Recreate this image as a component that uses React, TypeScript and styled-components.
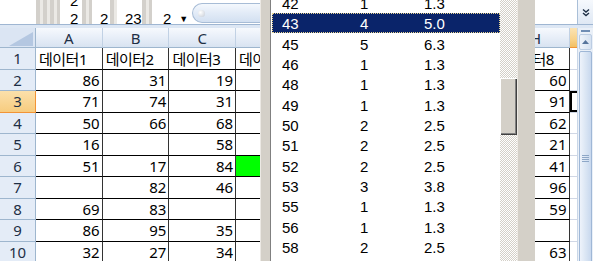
import React from "react";
import styled, { createGlobalStyle } from "styled-components";

const GlobalStyle = createGlobalStyle`
  html, body {
    margin: 0;
    padding: 0;
    background: #fff;
    overflow: hidden;
  }
`;

const Window = styled.div`
  position: relative;
  width: 593px;
  height: 261px;
  overflow: hidden;
  display: flex;
  flex-direction: column;
  font-family: "Noto Sans", "Noto Sans CJK KR", sans-serif;
  font-size: 15px;
  color: #000;
  background: #fff;
`;

/* ---------- formula bar strip ---------- */
const TopBar = styled.div`
  display: flex;
  height: 24px;
  flex-shrink: 0;
  background: #fff;
  overflow: hidden;
`;

const Blank = styled.div<{ $w: number }>`
  width: ${(p) => p.$w}px;
  flex-shrink: 0;
`;

const Grip = styled.div<{ $w: number }>`
  width: ${(p) => p.$w}px;
  flex-shrink: 0;
  background: repeating-linear-gradient(90deg, #d3d0cb 0 4px, #ebe9e5 4px 7px);
`;

const Field = styled.div<{ $w: number; $pad: number }>`
  width: ${(p) => p.$w}px;
  flex-shrink: 0;
  box-sizing: border-box;
  padding: 10px 0 0 ${(p) => p.$pad}px;
  display: flex;
  flex-direction: column;
  overflow: hidden;
  font-family: "Liberation Sans", sans-serif;
  font-size: 15px;
  line-height: 18px;
  white-space: nowrap;
`;

const CutLine = styled.span`
  margin-top: -18px;
`;

const Caret = styled.span`
  margin-left: 8px;
  font-size: 9px;
  vertical-align: 2px;
`;

const Pill = styled.div`
  flex: 1;
  margin: 3px 0 1px;
  border: 1px solid #a7bcd6;
  border-right: none;
  border-radius: 11px 0 0 11px;
  background: linear-gradient(180deg, #f4f8fd 0%, #e2ebf7 50%, #d3e0f1 100%);
  display: flex;
  align-items: center;
  padding-left: 5px;
`;

const Knob = styled.div`
  width: 7px;
  height: 7px;
  border-radius: 50%;
  background: radial-gradient(circle at 35% 35%, #ffffff 0%, #d6dbe2 70%, #b9c0ca 100%);
`;

const NameBox = styled.div`
  width: 42px;
  flex-shrink: 0;
  background: #fff;
`;

const ExpandButton = styled.div`
  width: 16px;
  flex-shrink: 0;
  box-sizing: border-box;
  border-left: 1px solid #a9bfd8;
  background: linear-gradient(180deg, #f6f9fd, #dfe8f4);
  display: flex;
  align-items: center;
  justify-content: center;
`;

const Strip = styled.div`
  height: 3px;
  flex-shrink: 0;
  border-top: 1px solid #9fb6d2;
  background: #dde7f4;
`;

/* ---------- sheet ---------- */
const Body = styled.div`
  flex: 1;
  display: flex;
  overflow: hidden;
`;

const Grid = styled.div`
  flex: 1;
  display: flex;
  flex-direction: column;
  overflow: hidden;
`;

const HeaderRow = styled.div`
  display: flex;
  height: 20px;
  flex-shrink: 0;
`;

const Corner = styled.div`
  width: 36px;
  flex-shrink: 0;
  box-sizing: border-box;
  background: #dbe5f3;
  border-right: 1px solid #9eb6ce;
  border-bottom: 1px solid #9eb6ce;
  display: flex;
  align-items: flex-end;
  justify-content: flex-end;
  padding: 0 2px 1px 0;
`;

const ColHead = styled.div<{ $sel?: boolean }>`
  width: 66.7px;
  flex-shrink: 0;
  box-sizing: border-box;
  background: ${(p) =>
    p.$sel
      ? "linear-gradient(180deg, #fbe3b4 0%, #f8d28a 60%, #f2bf62 100%)"
      : "linear-gradient(180deg, #f6f9fd 0%, #e6edf7 55%, #d8e3f1 100%)"};
  border-right: 1px solid ${(p) => (p.$sel ? "#f29436" : "#c1d1e4")};
  border-bottom: 1px solid ${(p) => (p.$sel ? "#f29436" : "#9eb6ce")};
  display: flex;
  align-items: center;
  justify-content: center;
  color: #1e2f45;
`;

const Row = styled.div`
  display: flex;
  height: 21.5px;
  flex-shrink: 0;
`;

const RowHead = styled.div<{ $sel?: boolean }>`
  width: 36px;
  flex-shrink: 0;
  box-sizing: border-box;
  background: ${(p) =>
    p.$sel ? "linear-gradient(180deg, #fbe0ab, #f7cc7f)" : "#e4ecf7"};
  border-right: 1px solid ${(p) => (p.$sel ? "#f29436" : "#9eb6ce")};
  border-bottom: 1px solid ${(p) => (p.$sel ? "#f29436" : "#9eb6ce")};
  display: flex;
  align-items: center;
  justify-content: center;
  color: #1e2f45;
`;

const Cell = styled.div<{
  $num?: boolean;
  $fill?: string;
  $plain?: boolean;
  $active?: boolean;
}>`
  width: 66.7px;
  flex-shrink: 0;
  box-sizing: border-box;
  background: ${(p) => p.$fill || "#fff"};
  border-right: 1px solid ${(p) => (p.$plain ? "#d0d7e5" : "#333")};
  border-bottom: 1px solid ${(p) => (p.$plain ? "#d0d7e5" : "#000")};
  box-shadow: ${(p) =>
    p.$active ? "inset 2px 2px 0 #000, inset 0 -2px 0 #000" : "none"};
  display: flex;
  align-items: center;
  justify-content: ${(p) => (p.$num ? "flex-end" : "flex-start")};
  padding: ${(p) => (p.$num ? "0 2px 0 0" : "0 0 0 3px")};
  white-space: nowrap;
  overflow: hidden;
  letter-spacing: ${(p) => (p.$num ? "0" : "-0.5px")};
`;

const VScroll = styled.div`
  width: 16px;
  flex-shrink: 0;
  box-sizing: border-box;
  display: flex;
  flex-direction: column;
  background: #eaf0f8;
  border-left: 1px solid #c9d7e8;
`;

const SplitBox = styled.div`
  height: 6px;
  flex-shrink: 0;
  display: flex;
  align-items: center;
  justify-content: center;
  &::before {
    content: "";
    width: 9px;
    height: 2px;
    background: #6f8db4;
  }
`;

const ArrowButton = styled.div`
  height: 16px;
  flex-shrink: 0;
  margin: 0 1px;
  box-sizing: border-box;
  border: 1px solid #bccde3;
  border-radius: 2px;
  background: linear-gradient(90deg, #eef3fa, #d6e2f1);
  display: flex;
  align-items: center;
  justify-content: center;
`;

const ScrollThumb = styled.div`
  flex: 1;
  margin: 1px 1px -4px;
  box-sizing: border-box;
  border: 1px solid #9fb7d6;
  border-radius: 2px;
  background: linear-gradient(90deg, #eef3fb 0%, #dbe6f4 50%, #c8d8ee 100%);
  display: flex;
  align-items: center;
  justify-content: center;
`;

const GripLines = styled.div`
  width: 7px;
  height: 7px;
  background: repeating-linear-gradient(180deg, #8ea7c7 0 1px, transparent 1px 2px);
`;

/* ---------- dropdown list window ---------- */
const Popup = styled.div`
  position: absolute;
  left: 260px;
  top: 0;
  width: 275px;
  height: 261px;
  display: flex;
  font-family: "Liberation Sans", sans-serif;
  font-size: 15px;
`;

const FrameSide = styled.div<{ $w: number }>`
  width: ${(p) => p.$w}px;
  flex-shrink: 0;
  box-sizing: border-box;
  background: #d4d0c8;
  box-shadow: inset 1px 0 0 #ece9e4;
`;

const LeftFrame = styled(FrameSide)`
  border-right: 1px solid #808080;
`;

const List = styled.div`
  flex: 1;
  background: #fff;
  overflow: hidden;
`;

const ListInner = styled.div`
  margin-top: -7.4px;
`;

const ListRow = styled.div<{ $sel?: boolean }>`
  height: 20.36px;
  box-sizing: border-box;
  margin-left: 1px;
  padding: 1px 0 0 10px;
  display: grid;
  grid-template-columns: 78px 64px 1fr;
  align-items: center;
  background: ${(p) => (p.$sel ? "#0a246a" : "transparent")};
  color: ${(p) => (p.$sel ? "#fff" : "#000")};
  outline: ${(p) => (p.$sel ? "1px dotted #e9d58f" : "none")};
  outline-offset: -1px;
`;

const HatchTrack = styled.div`
  width: 17px;
  flex-shrink: 0;
  display: flex;
  flex-direction: column;
  background: repeating-conic-gradient(#d4d0c8 0 25%, #ffffff 0 50%) 0 0 / 2px 2px;
`;

const HatchThumb = styled.div`
  margin-top: 78px;
  height: 57px;
  background: #d4d0c8;
  box-shadow: inset 1px 1px 0 #fff, inset -1px -1px 0 #404040,
    inset -2px -2px 0 #808080;
`;

/* ---------- data ---------- */
type Val = string | number | null;

const columns = ["A", "B", "C", "D", "E", "F", "G", "H", "I"];

// columns E-G sit under the list window, so they stay empty here
const sheet: { n: number; vals: Val[]; green?: number }[] = [
  { n: 1, vals: ["데이터1", "데이터2", "데이터3", "데이터4", null, null, null, "데이터8"] },
  { n: 2, vals: [86, 31, 19, null, null, null, null, 60] },
  { n: 3, vals: [71, 74, 31, null, null, null, null, 91] },
  { n: 4, vals: [50, 66, 68, null, null, null, null, 62] },
  { n: 5, vals: [16, null, 58, null, null, null, null, 21] },
  { n: 6, vals: [51, 17, 84, null, null, null, null, 41], green: 3 },
  { n: 7, vals: [null, 82, 46, null, null, null, null, 96] },
  { n: 8, vals: [69, 83, null, null, null, null, null, 59] },
  { n: 9, vals: [86, 95, 35, null, null, null, null, null] },
  { n: 10, vals: [32, 27, 34, null, null, null, null, 63] },
];

const listItems: [string, string, string][] = [
  ["42", "1", "1.3"],
  ["43", "4", "5.0"],
  ["45", "5", "6.3"],
  ["46", "1", "1.3"],
  ["48", "1", "1.3"],
  ["49", "1", "1.3"],
  ["50", "2", "2.5"],
  ["51", "2", "2.5"],
  ["52", "2", "2.5"],
  ["53", "3", "3.8"],
  ["55", "1", "1.3"],
  ["56", "1", "1.3"],
  ["58", "2", "2.5"],
];

const SELECTED_ROW = 3;
const SELECTED_ITEM = "43";

export default function App() {
  return (
    <>
      <GlobalStyle />
      <Window>
        <TopBar>
          <Blank $w={36} />
          <Grip $w={24} />
          <Field $w={22} $pad={10}>
            <CutLine>2</CutLine>
            <span>2</span>
          </Field>
          <Grip $w={10} />
          <Field $w={18} $pad={8}>
            <span>2</span>
          </Field>
          <Grip $w={7} />
          <Field $w={25} $pad={8}>
            <span>23</span>
          </Field>
          <Grip $w={10} />
          <Field $w={40} $pad={11}>
            <span>
              2<Caret>▼</Caret>
            </span>
          </Field>
          <Pill>
            <Knob />
          </Pill>
          <NameBox />
          <ExpandButton>
            <svg width="8" height="9" viewBox="0 0 8 9">
              <path d="M1 1.5 L4 4 L7 1.5 M1 5 L4 7.5 L7 5" fill="none" stroke="#1e2f45" strokeWidth="1.4" />
            </svg>
          </ExpandButton>
        </TopBar>
        <Strip />
        <Body>
          <Grid>
            <HeaderRow>
              <Corner>
                <svg width="24" height="14" viewBox="0 0 24 14">
                  <path d="M24 0 L24 14 L0 14 Z" fill="#b4c7e1" />
                </svg>
              </Corner>
              {columns.map((c) => (
                <ColHead key={c} $sel={c === "I"}>
                  {c}
                </ColHead>
              ))}
            </HeaderRow>
            {sheet.map((r) => (
              <Row key={r.n}>
                <RowHead $sel={r.n === SELECTED_ROW}>{r.n}</RowHead>
                {columns.map((c, i) => {
                  const v = r.vals[i] ?? null;
                  const plain = c === "I";
                  return (
                    <Cell
                      key={c}
                      $num={typeof v === "number"}
                      $plain={plain}
                      $active={plain && r.n === SELECTED_ROW}
                      $fill={r.green === i ? "#00ff00" : undefined}
                    >
                      {v}
                    </Cell>
                  );
                })}
              </Row>
            ))}
          </Grid>
          <VScroll>
            <SplitBox />
            <ArrowButton>
              <svg width="7" height="4" viewBox="0 0 7 4">
                <path d="M0 4 L3.5 0 L7 4 Z" fill="#56749c" />
              </svg>
            </ArrowButton>
            <ScrollThumb>
              <GripLines />
            </ScrollThumb>
          </VScroll>
        </Body>

        <Popup>
          <LeftFrame $w={11} />
          <List>
            <ListInner>
              {listItems.map(([a, b, c]) => (
                <ListRow key={a} $sel={a === SELECTED_ITEM}>
                  <span>{a}</span>
                  <span>{b}</span>
                  <span>{c}</span>
                </ListRow>
              ))}
            </ListInner>
          </List>
          <HatchTrack>
            <HatchThumb />
          </HatchTrack>
          <FrameSide $w={18} />
        </Popup>
      </Window>
    </>
  );
}
